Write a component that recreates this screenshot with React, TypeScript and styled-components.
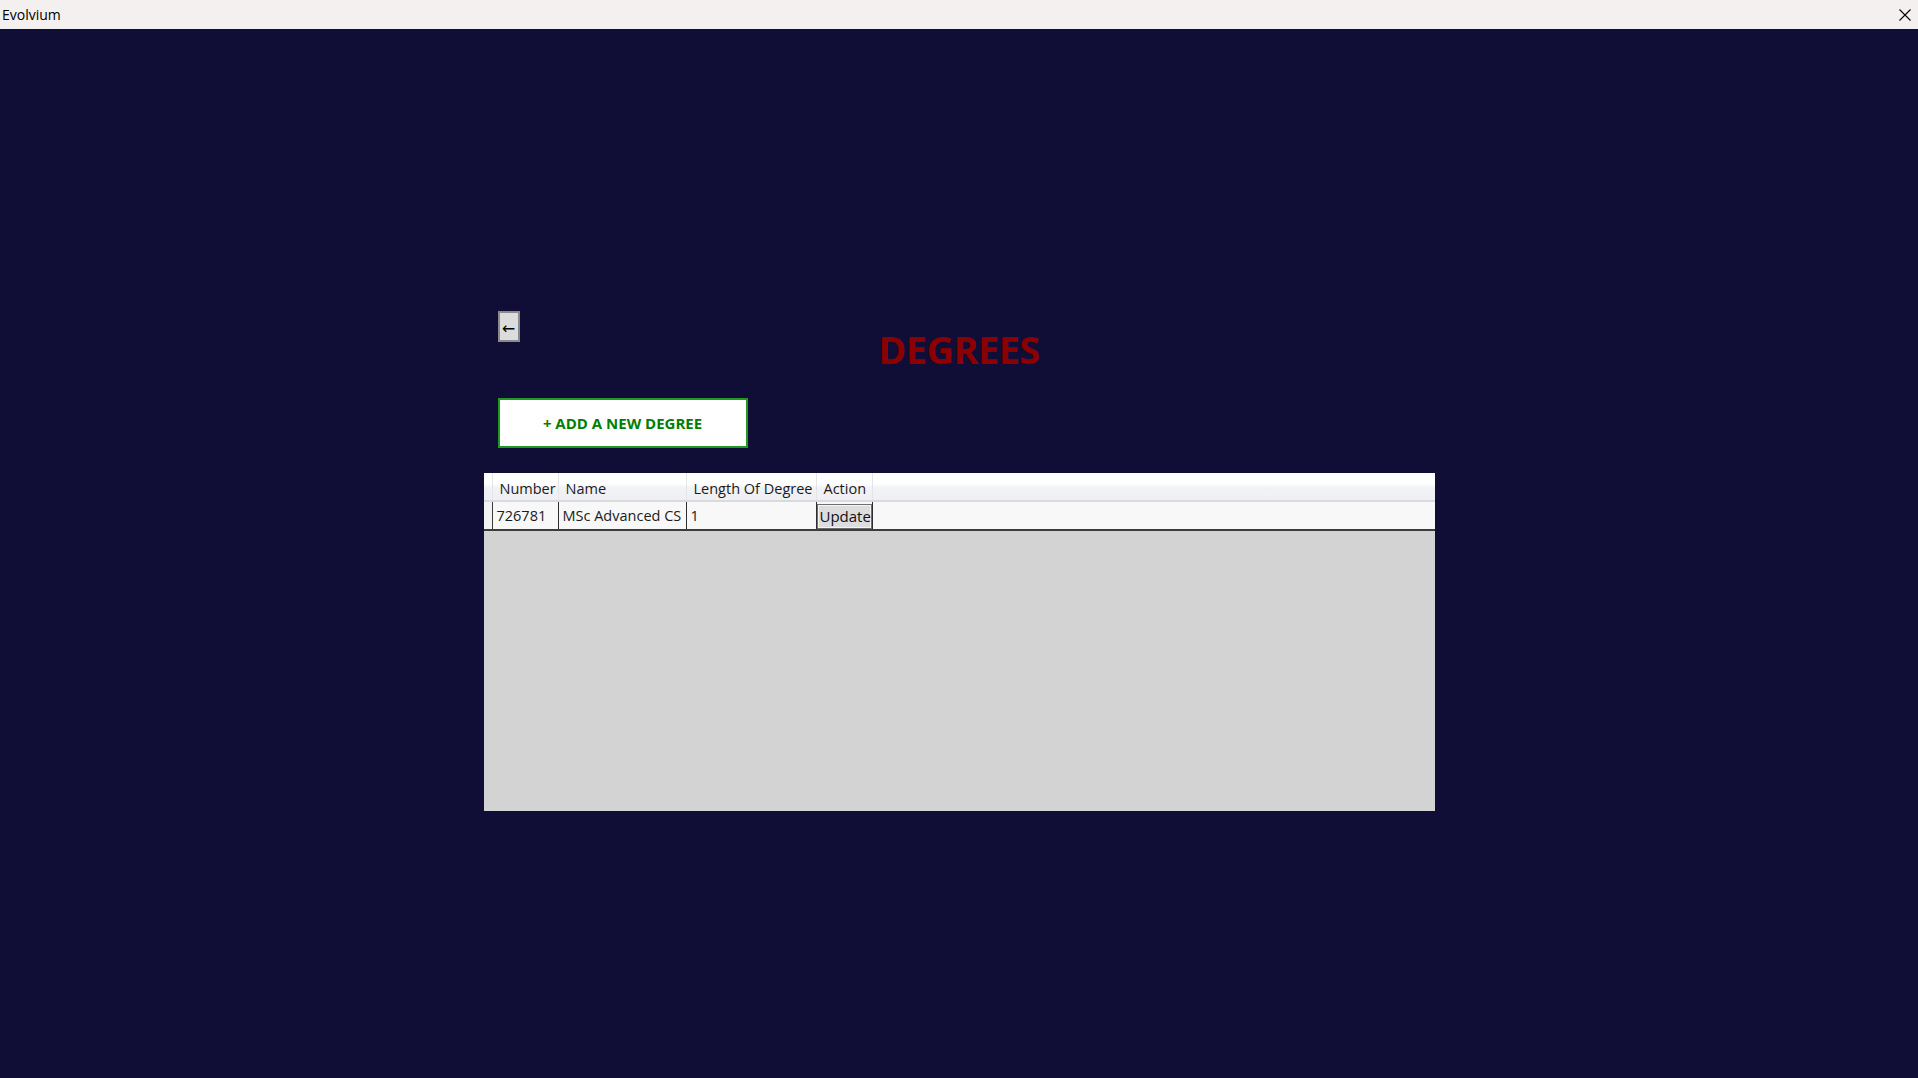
import React from 'react'
import styled, {createGlobalStyle} from 'styled-components'

const GlobalStyle = createGlobalStyle`
  html, body {
    margin: 0;
    padding: 0;
    height: 100%;
  }
  body {
    font-family: "Open Sans", "Noto Sans", sans-serif;
    background: #100e36;
  }
  #root {
    height: 100%;
  }
`

const Window = styled.div`
  width: 100%;
  height: 100vh;
  display: flex;
  flex-direction: column;
  overflow: hidden;
`

const TitleBar = styled.div`
  flex: 0 0 29px;
  display: flex;
  align-items: center;
  justify-content: space-between;
  padding: 0 6px 0 2px;
  background: #f3f0ef;
`

const AppName = styled.span`
  font-size: 14px;
  color: #000;
`

const CloseButton = styled.button`
  display: flex;
  align-items: center;
  justify-content: center;
  width: 14px;
  height: 14px;
  padding: 0;
  border: none;
  background: transparent;
  cursor: pointer;
`

const Main = styled.main`
  flex: 1;
  display: flex;
  justify-content: center;
  padding-top: 282px;
  background: #100e36;
`

const Panel = styled.section`
  width: 951px;
  display: flex;
  flex-direction: column;
`

const TopRow = styled.div`
  display: grid;
  grid-template-columns: 1fr auto 1fr;
  align-items: start;
`

const BackButton = styled.button`
  justify-self: start;
  width: 22px;
  height: 31px;
  margin-left: 14px;
  padding: 3px 0 0 0;
  display: flex;
  align-items: center;
  justify-content: center;
  border: 2px solid #8a8a8a;
  background: #dcdcdc;
  color: #000;
  font-size: 16px;
  font-family: "DejaVu Sans", sans-serif;
  cursor: pointer;
`

const Title = styled.h1`
  margin: 19px 0 0;
  font-size: 38px;
  font-weight: 700;
  line-height: 1;
  color: #8b0000;
  letter-spacing: -0.6px;
`

const AddButton = styled.button`
  align-self: flex-start;
  width: 250px;
  height: 50px;
  margin: 30px 0 0 14px;
  border: 2px solid #1f9a1f;
  background: #fff;
  color: #008000;
  font-family: "Open Sans", sans-serif;
  font-size: 15px;
  font-weight: 700;
  cursor: pointer;
`

const Grid = styled.div`
  margin-top: 25px;
  height: 338px;
  display: flex;
  flex-direction: column;
  background: #d3d3d3;
`

const columns = '9px 66px 128px 130px 56px 1fr'

const HeaderRow = styled.div`
  display: grid;
  grid-template-columns: ${columns};
  height: 29px;
  box-sizing: border-box;
  border-bottom: 2px solid #d9dade;
  background: linear-gradient(#ffffff 0%, #ffffff 40%, #f1f2f5 55%, #eff0f3 100%);
`

const HeaderCell = styled.div<{ $last?: boolean }>`
  display: flex;
  align-items: center;
  padding: 3px 0 0 7px;
  border-right: ${({$last}) => ($last ? 'none' : '1px solid #e3e4e8')};
  font-size: 14.5px;
  color: #1b1b1b;
  white-space: nowrap;
  overflow: hidden;
`

const DataRow = styled.div`
  display: grid;
  grid-template-columns: ${columns};
  height: 29px;
  box-sizing: border-box;
  border-bottom: 2px solid #3c3c3c;
  background: #f8f8f8;
`

const RowHeader = styled.div`
  background: #f3f3f3;
  border-right: 1px solid #3a3a3a;
`

const DataCell = styled.div<{ $last?: boolean }>`
  display: flex;
  align-items: center;
  padding-left: 4px;
  border-right: ${({$last}) => ($last ? 'none' : '1px solid #2e2e2e')};
  font-size: 14.5px;
  color: #1b1b1b;
  white-space: nowrap;
  overflow: hidden;
`

const ActionCell = styled.div`
  display: flex;
  align-items: center;
  border-right: 1px solid #2e2e2e;
`

const UpdateButton = styled.button`
  width: 55px;
  height: 25px;
  margin-top: 1px;
  padding: 0 0 0 2px;
  border: 1px solid #6e6e6e;
  box-shadow: inset 0 0 0 1px #f4f4f4;
  background: #dddddd;
  color: #111;
  font-family: "Open Sans", sans-serif;
  font-size: 15px;
  cursor: pointer;
`

type Degree = {
  number: string
  name: string
  length: string
}

const degrees: Degree[] = [
  {number: '726781', name: 'MSc Advanced CS', length: '1'},
]

export default function App() {
  return (
    <>
      <GlobalStyle/>
      <Window>
        <TitleBar>
          <AppName>Evolvium</AppName>
          <CloseButton aria-label="Close">
            <svg width="12" height="12" viewBox="0 0 12 12">
              <path d="M0.5 0.5 L11.5 11.5 M11.5 0.5 L0.5 11.5" stroke="#000" strokeWidth="1.1"/>
            </svg>
          </CloseButton>
        </TitleBar>
        <Main>
          <Panel>
            <TopRow>
              <BackButton>←</BackButton>
              <Title>DEGREES</Title>
              <span/>
            </TopRow>
            <AddButton>+ ADD A NEW DEGREE</AddButton>
            <Grid>
              <HeaderRow>
                <HeaderCell style={{padding: 0}}/>
                <HeaderCell>Number</HeaderCell>
                <HeaderCell>Name</HeaderCell>
                <HeaderCell>Length Of Degree</HeaderCell>
                <HeaderCell>Action</HeaderCell>
                <HeaderCell $last/>
              </HeaderRow>
              {degrees.map(d => (
                <DataRow key={d.number}>
                  <RowHeader/>
                  <DataCell>{d.number}</DataCell>
                  <DataCell>{d.name}</DataCell>
                  <DataCell>{d.length}</DataCell>
                  <ActionCell>
                    <UpdateButton>Update</UpdateButton>
                  </ActionCell>
                  <DataCell $last/>
                </DataRow>
              ))}
            </Grid>
          </Panel>
        </Main>
      </Window>
    </>
  )
}
